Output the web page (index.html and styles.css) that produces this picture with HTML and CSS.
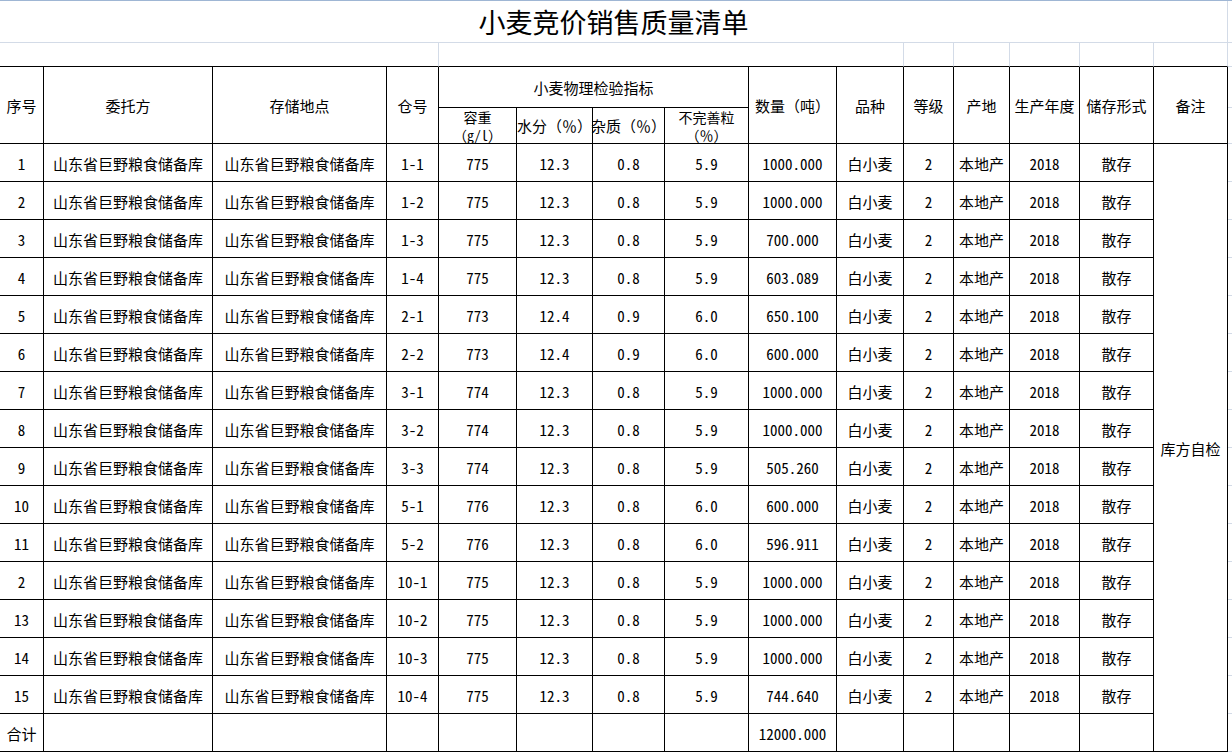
FILE: index.html
```html
<!DOCTYPE html>
<html lang="zh-CN">
<head>
<meta charset="utf-8">
<title>小麦竞价销售质量清单</title>
<link rel="stylesheet" href="styles.css">
</head>
<body>
<div class="sheet">
  <div class="c title">小麦竞价销售质量清单</div><div class="c x"></div>

  <div class="c blank span4"></div><div class="c blank span6"></div><div class="c blank"></div><div class="c blank"></div><div class="c blank"></div><div class="c blank"></div><div class="c blank"></div><div class="c x"></div>

  <div class="c h rs2">序号</div><div class="c h rs2">委托方</div><div class="c h rs2">存储地点</div><div class="c h rs2">仓号</div><div class="c h cs4">小麦物理检验指标</div><div class="c h rs2">数量（吨）</div><div class="c h rs2">品种</div><div class="c h rs2">等级</div><div class="c h rs2">产地</div><div class="c h rs2">生产年度</div><div class="c h rs2">储存形式</div><div class="c h rs2">备注</div><div class="c x"></div>
  <div class="c h two"><span class="ln">容重</span><span class="ln">（<span class="hw">g/l</span>）</span></div><div class="c h">水分（％）</div><div class="c h">杂质（％）</div><div class="c h two"><span class="ln">不完善粒</span><span class="ln">（％）</span></div><div class="c x nob"></div>

  <div class="c">1</div><div class="c">山东省巨野粮食储备库</div><div class="c">山东省巨野粮食储备库</div><div class="c">1-1</div><div class="c">775</div><div class="c">12.3</div><div class="c">0.8</div><div class="c">5.9</div><div class="c">1000.000</div><div class="c">白小麦</div><div class="c">2</div><div class="c">本地产</div><div class="c">2018</div><div class="c">散存</div><div class="c note">库方自检</div><div class="c x"></div>
  <div class="c">2</div><div class="c">山东省巨野粮食储备库</div><div class="c">山东省巨野粮食储备库</div><div class="c">1-2</div><div class="c">775</div><div class="c">12.3</div><div class="c">0.8</div><div class="c">5.9</div><div class="c">1000.000</div><div class="c">白小麦</div><div class="c">2</div><div class="c">本地产</div><div class="c">2018</div><div class="c">散存</div><div class="c x"></div>
  <div class="c">3</div><div class="c">山东省巨野粮食储备库</div><div class="c">山东省巨野粮食储备库</div><div class="c">1-3</div><div class="c">775</div><div class="c">12.3</div><div class="c">0.8</div><div class="c">5.9</div><div class="c">700.000</div><div class="c">白小麦</div><div class="c">2</div><div class="c">本地产</div><div class="c">2018</div><div class="c">散存</div><div class="c x"></div>
  <div class="c">4</div><div class="c">山东省巨野粮食储备库</div><div class="c">山东省巨野粮食储备库</div><div class="c">1-4</div><div class="c">775</div><div class="c">12.3</div><div class="c">0.8</div><div class="c">5.9</div><div class="c">603.089</div><div class="c">白小麦</div><div class="c">2</div><div class="c">本地产</div><div class="c">2018</div><div class="c">散存</div><div class="c x"></div>
  <div class="c">5</div><div class="c">山东省巨野粮食储备库</div><div class="c">山东省巨野粮食储备库</div><div class="c">2-1</div><div class="c">773</div><div class="c">12.4</div><div class="c">0.9</div><div class="c">6.0</div><div class="c">650.100</div><div class="c">白小麦</div><div class="c">2</div><div class="c">本地产</div><div class="c">2018</div><div class="c">散存</div><div class="c x"></div>
  <div class="c">6</div><div class="c">山东省巨野粮食储备库</div><div class="c">山东省巨野粮食储备库</div><div class="c">2-2</div><div class="c">773</div><div class="c">12.4</div><div class="c">0.9</div><div class="c">6.0</div><div class="c">600.000</div><div class="c">白小麦</div><div class="c">2</div><div class="c">本地产</div><div class="c">2018</div><div class="c">散存</div><div class="c x"></div>
  <div class="c">7</div><div class="c">山东省巨野粮食储备库</div><div class="c">山东省巨野粮食储备库</div><div class="c">3-1</div><div class="c">774</div><div class="c">12.3</div><div class="c">0.8</div><div class="c">5.9</div><div class="c">1000.000</div><div class="c">白小麦</div><div class="c">2</div><div class="c">本地产</div><div class="c">2018</div><div class="c">散存</div><div class="c x"></div>
  <div class="c">8</div><div class="c">山东省巨野粮食储备库</div><div class="c">山东省巨野粮食储备库</div><div class="c">3-2</div><div class="c">774</div><div class="c">12.3</div><div class="c">0.8</div><div class="c">5.9</div><div class="c">1000.000</div><div class="c">白小麦</div><div class="c">2</div><div class="c">本地产</div><div class="c">2018</div><div class="c">散存</div><div class="c x"></div>
  <div class="c">9</div><div class="c">山东省巨野粮食储备库</div><div class="c">山东省巨野粮食储备库</div><div class="c">3-3</div><div class="c">774</div><div class="c">12.3</div><div class="c">0.8</div><div class="c">5.9</div><div class="c">505.260</div><div class="c">白小麦</div><div class="c">2</div><div class="c">本地产</div><div class="c">2018</div><div class="c">散存</div><div class="c x"></div>
  <div class="c">10</div><div class="c">山东省巨野粮食储备库</div><div class="c">山东省巨野粮食储备库</div><div class="c">5-1</div><div class="c">776</div><div class="c">12.3</div><div class="c">0.8</div><div class="c">6.0</div><div class="c">600.000</div><div class="c">白小麦</div><div class="c">2</div><div class="c">本地产</div><div class="c">2018</div><div class="c">散存</div><div class="c x"></div>
  <div class="c">11</div><div class="c">山东省巨野粮食储备库</div><div class="c">山东省巨野粮食储备库</div><div class="c">5-2</div><div class="c">776</div><div class="c">12.3</div><div class="c">0.8</div><div class="c">6.0</div><div class="c">596.911</div><div class="c">白小麦</div><div class="c">2</div><div class="c">本地产</div><div class="c">2018</div><div class="c">散存</div><div class="c x"></div>
  <div class="c">2</div><div class="c">山东省巨野粮食储备库</div><div class="c">山东省巨野粮食储备库</div><div class="c">10-1</div><div class="c">775</div><div class="c">12.3</div><div class="c">0.8</div><div class="c">5.9</div><div class="c">1000.000</div><div class="c">白小麦</div><div class="c">2</div><div class="c">本地产</div><div class="c">2018</div><div class="c">散存</div><div class="c x"></div>
  <div class="c">13</div><div class="c">山东省巨野粮食储备库</div><div class="c">山东省巨野粮食储备库</div><div class="c">10-2</div><div class="c">775</div><div class="c">12.3</div><div class="c">0.8</div><div class="c">5.9</div><div class="c">1000.000</div><div class="c">白小麦</div><div class="c">2</div><div class="c">本地产</div><div class="c">2018</div><div class="c">散存</div><div class="c x"></div>
  <div class="c">14</div><div class="c">山东省巨野粮食储备库</div><div class="c">山东省巨野粮食储备库</div><div class="c">10-3</div><div class="c">775</div><div class="c">12.3</div><div class="c">0.8</div><div class="c">5.9</div><div class="c">1000.000</div><div class="c">白小麦</div><div class="c">2</div><div class="c">本地产</div><div class="c">2018</div><div class="c">散存</div><div class="c x"></div>
  <div class="c">15</div><div class="c">山东省巨野粮食储备库</div><div class="c">山东省巨野粮食储备库</div><div class="c">10-4</div><div class="c">775</div><div class="c">12.3</div><div class="c">0.8</div><div class="c">5.9</div><div class="c">744.640</div><div class="c">白小麦</div><div class="c">2</div><div class="c">本地产</div><div class="c">2018</div><div class="c">散存</div><div class="c x"></div>

  <div class="c">合计</div><div class="c"></div><div class="c"></div><div class="c"></div><div class="c"></div><div class="c"></div><div class="c"></div><div class="c"></div><div class="c">12000.000</div><div class="c"></div><div class="c"></div><div class="c"></div><div class="c"></div><div class="c"></div><div class="c x"></div>
</div>
</body>
</html>
```
FILE: styles.css
```css
html, body {
  margin: 0;
  padding: 0;
  background: #ffffff;
}

.sheet {
  display: grid;
  grid-template-columns: 44px 169px 174px 52px 78px 76px 72px 84px 88px 67px 50px 56px 70px 74px 74px 1fr;
  grid-template-rows: 42px 24px 41px 36px repeat(16, 38px);
  border-top: 1px solid #9fb6d4;
  width: 1232px;
  font-family: "Noto Sans CJK SC", "Noto Sans", sans-serif;
  font-size: 15px;
  line-height: 17px;
  color: #000;
  font-feature-settings: "hwid" 1;
}

.c {
  box-sizing: border-box;
  border-right: 1px solid #000;
  border-bottom: 1px solid #000;
  display: flex;
  align-items: center;
  justify-content: center;
  text-align: center;
  white-space: nowrap;
  padding-top: 2px;
}

.title {
  grid-column: 1 / span 15;
  border-right-color: #d3dbe7;
  border-bottom-color: #d3dbe7;
  font-size: 27px;
  line-height: 32px;
  padding-top: 0;
  font-feature-settings: normal;
}

.blank {
  border-right-color: #d3dbe7;
}

.span4 { grid-column: span 4; }
.span6 { grid-column: span 6; }

.h {
  padding-top: 0;
  font-feature-settings: normal;
}

.hw {
  font-feature-settings: "hwid" 1;
}

.rs2 { grid-row: span 2; }
.cs4 { grid-column: span 4; }

.two {
  flex-direction: column;
  padding-top: 1px;
}

.ln {
  display: block;
  height: 18px;
  line-height: 18px;
  font-size: 14px;
  overflow: visible;
}

.note {
  grid-column: 15;
  grid-row: 5 / span 16;
}

.x {
  border-right: none;
  border-bottom-color: #d3dbe7;
}

.nob {
  border-bottom-color: #d3dbe7;
}
```
